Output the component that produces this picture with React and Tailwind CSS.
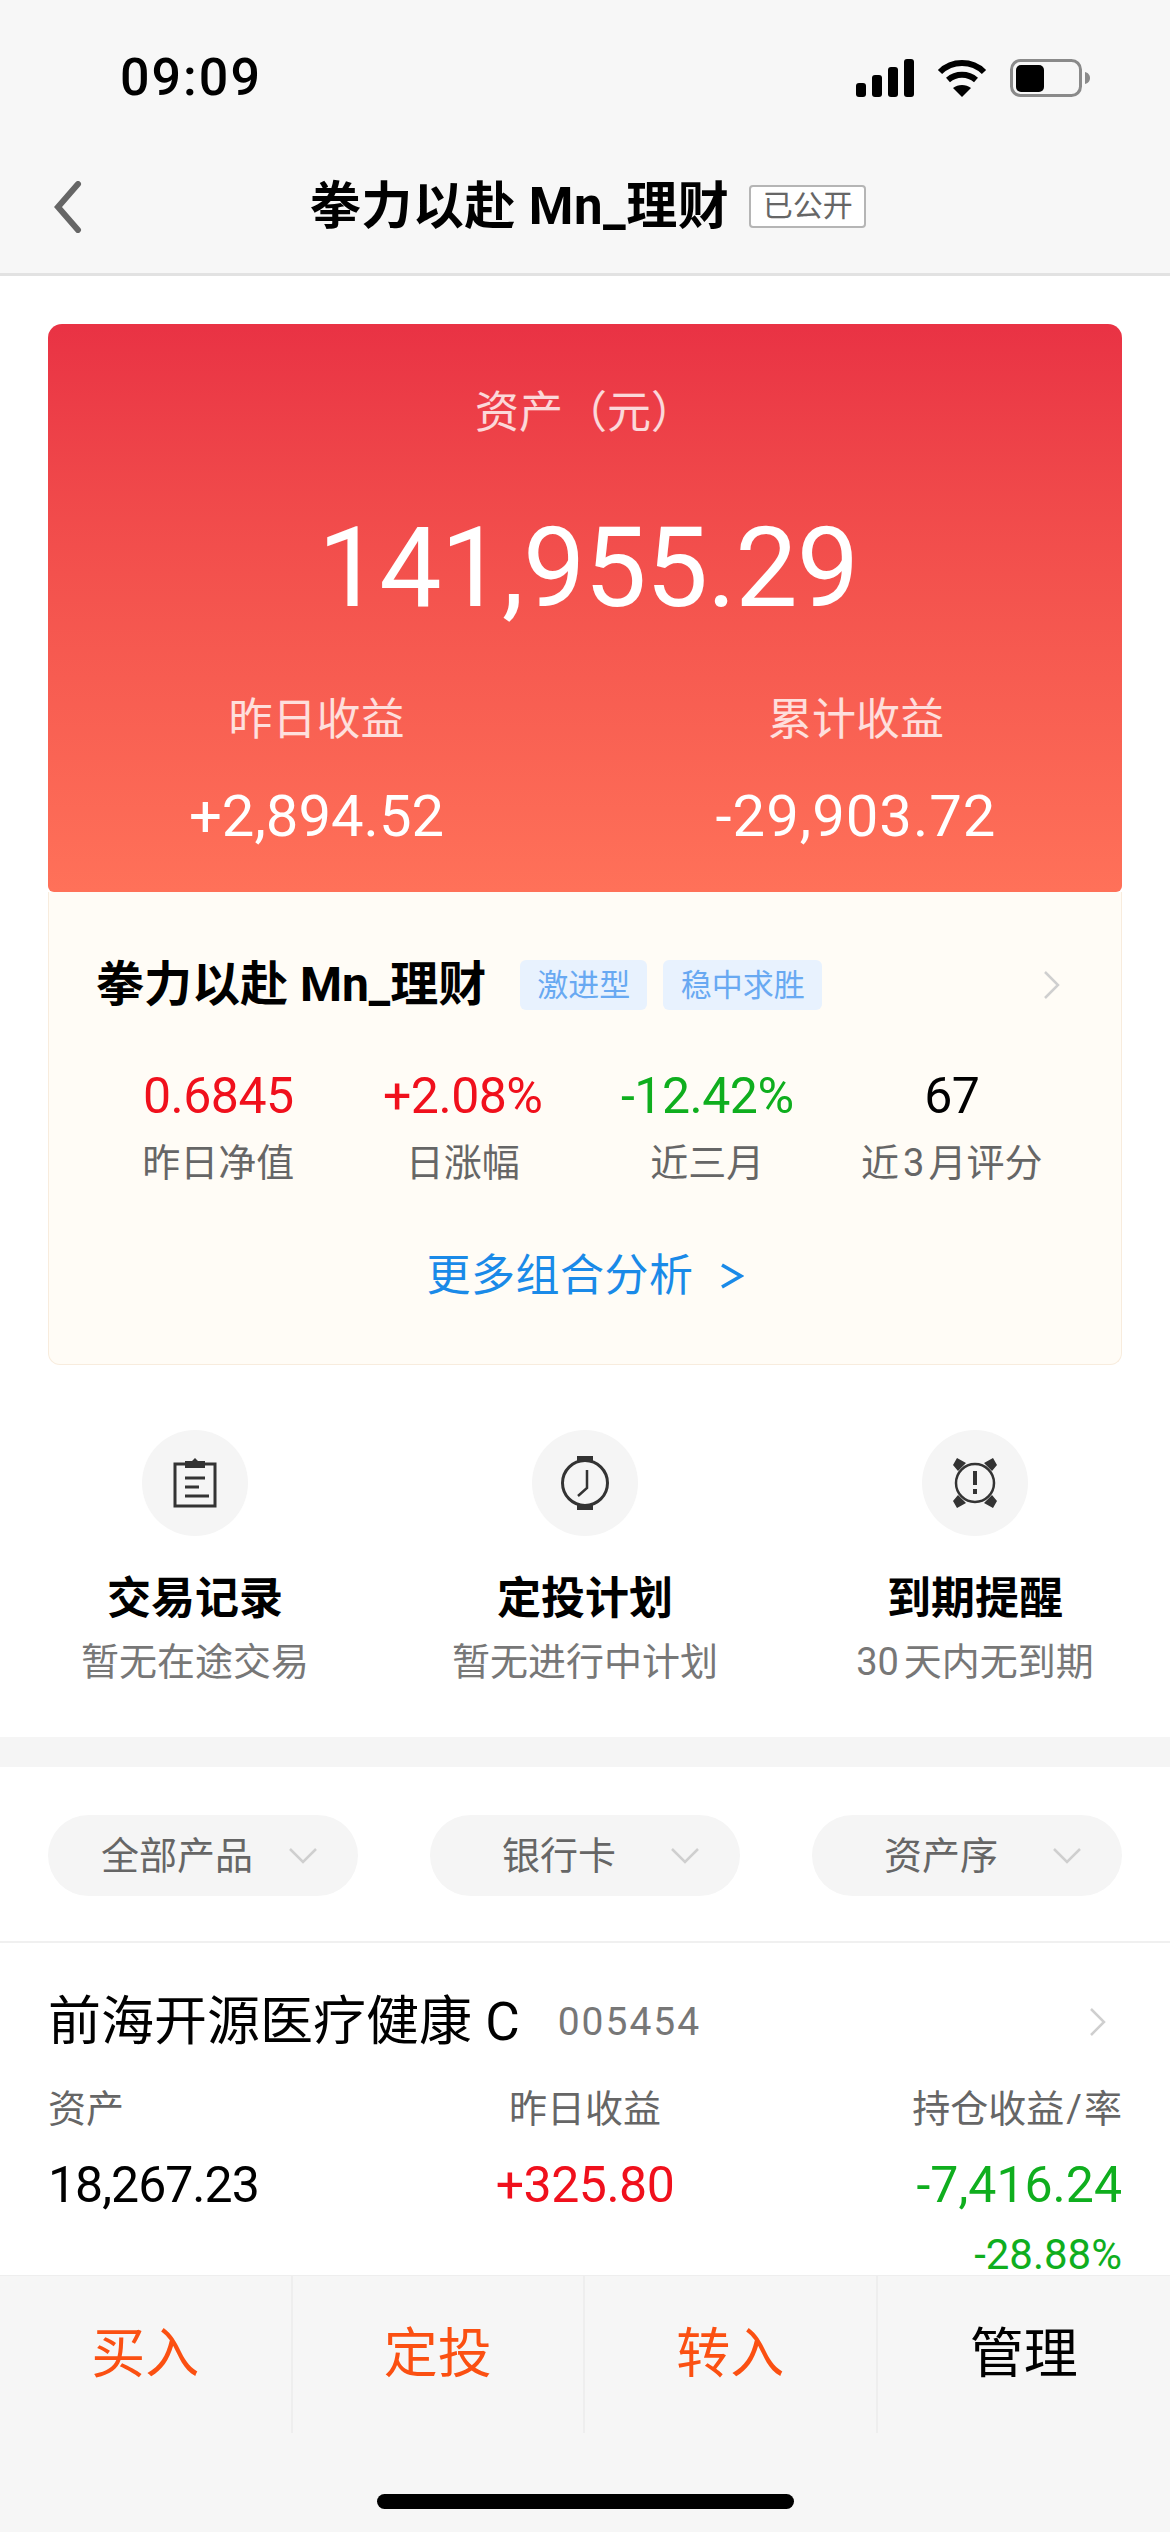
import React from "react";

const FONT = "font-['Roboto','Noto_Sans_CJK_SC',sans-serif]";

const stats = [
  { value: "0.6845", label: "昨日净值", color: "text-[#f0101c]" },
  { value: "+2.08%", label: "日涨幅", color: "text-[#f0101c]" },
  { value: "-12.42%", label: "近三月", color: "text-[#0fae1e]" },
  { value: "67", label: <>近<span className="mx-[4px]">3</span>月评分</>, color: "text-black" },
];

const filters = ["全部产品", "银行卡", "资产序"];
const actions = [
  { label: "买入", color: "text-[#fb5012]" },
  { label: "定投", color: "text-[#fb5012]" },
  { label: "转入", color: "text-[#fb5012]" },
  { label: "管理", color: "text-black" },
];

const ClipboardIcon = () => (
  <svg width="44" height="50" viewBox="0 0 44 50" fill="none" stroke="#333" strokeWidth="3">
    <rect x="2" y="6" width="40" height="42" />
    <path d="M12 3h7l3-3 3 3h7v7H12z" fill="#333" stroke="none" />
    <path d="M12 20h20M12 29h14M12 38h24" strokeWidth="3" />
  </svg>
);

const WatchIcon = () => (
  <svg width="48" height="54" viewBox="0 0 48 54" fill="none" stroke="#333" strokeWidth="3">
    <circle cx="24" cy="27" r="22.5" />
    <path d="M16 0h16v6H16zM16 48h16v6H16z" fill="#333" stroke="none" />
    <path d="M26 14v18l-9 8" strokeWidth="2.5" />
  </svg>
);

const AlarmIcon = () => (
  <svg width="46" height="50" viewBox="0 0 46 50" fill="none" stroke="#333" strokeWidth="2.5">
    <circle cx="23" cy="25" r="19" />
    <path d="M5 0l9 5-8 8-5-6zM41 0l-9 5 8 8 5-6zM5 50l9-5-8-8-5 6zM41 50l-9-5 8-8 5 6z" fill="#333" stroke="none" />
    <path d="M23 13v14" strokeWidth="4" />
    <path d="M23 31v5" strokeWidth="4" />
  </svg>
);

const shortcuts = [
  { icon: <ClipboardIcon />, title: "交易记录", sub: "暂无在途交易" },
  { icon: <WatchIcon />, title: "定投计划", sub: "暂无进行中计划" },
  { icon: <AlarmIcon />, title: "到期提醒", sub: <>30<span className="ml-[5px]">天内无到期</span></> },
];

const Chevron = ({ className = "" }) => (
  <svg className={className} width="17" height="28" viewBox="0 0 17 28" fill="none" stroke="#cfcfcf" strokeWidth="2.5">
    <path d="M2 1l13 13L2 27" />
  </svg>
);

const App = () => {
  return (
    <div className={`${FONT} flex h-[2532px] w-[1170px] flex-col overflow-hidden bg-white`}>
      {/* status bar + nav */}
      <div className="h-[276px] shrink-0 border-b-[3px] border-[#e2e2e2] bg-[#f7f7f7]">
        <div className="flex h-[156px] items-center justify-between pl-[120px] pr-[79px]">
          <span className="text-[52px] font-medium leading-none tracking-[2px] text-black">09:09</span>
          <div className="flex items-center gap-[23px]">
            <svg width="58" height="38" viewBox="0 0 58 38" fill="black">
              <rect x="0" y="24" width="10" height="14" rx="3" />
              <rect x="16" y="16" width="10" height="22" rx="3" />
              <rect x="32" y="8" width="10" height="30" rx="3" />
              <rect x="48" y="0" width="10" height="38" rx="3" />
            </svg>
            <svg width="50" height="38" viewBox="0 0 50 38" fill="none" stroke="black" strokeWidth="6">
              <path d="M3 13c12-12 32-12 44 0" />
              <path d="M11 21c8-7 20-7 28 0" />
              <path d="M25 38l-9-9c5-4 13-4 18 0z" fill="black" stroke="none" />
            </svg>
            <svg width="81" height="38" viewBox="0 0 81 38" fill="none">
              <rect x="1.5" y="1.5" width="69" height="35" rx="9" stroke="#8a8a8a" strokeWidth="3" />
              <rect x="6" y="6" width="28" height="27" rx="5" fill="black" />
              <path d="M75 13c4 1 5 4 5 6s-1 5-5 6z" fill="#8a8a8a" />
            </svg>
          </div>
        </div>
        <div className="relative flex h-[100px] items-center justify-center">
          <svg className="absolute left-[54px] top-[25px]" width="28" height="52" viewBox="0 0 28 52" fill="none" stroke="#666" strokeWidth="6" strokeLinecap="round">
            <path d="M24 3L4 26l20 23" />
          </svg>
          <div className="ml-[6px] flex items-center">
            <span className="text-[51px] font-bold leading-none tracking-[0.5px] text-black">拳力以赴 Mn_理财</span>
            <span className="ml-[20px] flex h-[43px] w-[117px] items-center justify-center rounded-[4px] border-2 border-[#b5b5b5] bg-white text-[30px] leading-none text-[#666]">已公开</span>
          </div>
        </div>
      </div>

      {/* page content, runs on under the action bar */}
      <div className="min-h-0 flex-1">
        <div className="px-[48px] pt-[48px]">
          <div className="h-[568px] rounded-t-[14px] rounded-b-[6px] bg-gradient-to-b from-[#e93244] to-[#ff7159] text-center text-white">
            <div className="pt-[62px] text-[44px] leading-[54px] text-white/80">资产（元）</div>
            <div className="mt-[58px] pl-[6px] text-[111px] font-normal leading-[140px] tracking-[-1px]">141,955.29</div>
            <div className="mt-[56px] grid grid-cols-2">
              <div>
                <div className="text-[44px] leading-[52px] text-white/80">昨日收益</div>
                <div className="mt-[36px] text-[58px] leading-[68px]">+2,894.52</div>
              </div>
              <div className="pl-[5px]">
                <div className="text-[44px] leading-[52px] text-white/80">累计收益</div>
                <div className="mt-[36px] text-[58px] leading-[68px] tracking-[1px]">-29,903.72</div>
              </div>
            </div>
          </div>
          <div className="h-[473px] rounded-b-[12px] border border-t-0 border-[#f8ecdd] bg-[#fffcf6] px-[47px]">
            <div className="flex h-[174px] items-center pt-[12px]">
              <span className="text-[48px] font-bold leading-none text-black">拳力以赴 Mn_理财</span>
              <span className="ml-[34px] flex h-[50px] w-[127px] items-center justify-center rounded-[6px] bg-[#e8f2fe] text-[31px] leading-none text-[#68a9f2]">激进型</span>
              <span className="ml-[16px] flex h-[50px] w-[159px] items-center justify-center rounded-[6px] bg-[#e8f2fe] text-[31px] leading-none text-[#68a9f2]">稳中求胜</span>
              <Chevron className="ml-auto mr-[14px]" />
            </div>
            <div className="grid grid-cols-4 text-center">
              {stats.map((s) => (
                <div key={s.value}>
                  <div className={`text-[50px] leading-[60px] tracking-[-0.5px] ${s.color}`}>{s.value}</div>
                  <div className="mt-[13px] text-[38px] leading-[48px] text-[#666]">{s.label}</div>
                </div>
              ))}
            </div>
            <div className="mt-[61px] flex items-center justify-center text-[44px] leading-[56px] tracking-[0.5px] text-[#1a8ae8]">
              更多组合分析
              <svg className="ml-[26px]" width="24" height="26" viewBox="0 0 24 26" fill="none" stroke="#1a8ae8" strokeWidth="3.5">
                <path d="M2 2l19 11L2 24" />
              </svg>
            </div>
          </div>
        </div>

        {/* shortcuts */}
        <div className="grid h-[372px] grid-cols-3 pt-[65px] text-center">
          {shortcuts.map((s) => (
            <div key={s.title} className="flex flex-col items-center">
              <div className="flex h-[106px] w-[106px] items-center justify-center rounded-full bg-[#f5f5f5]">{s.icon}</div>
              <div className="mt-[35px] text-[44px] font-bold leading-[56px] text-black">{s.title}</div>
              <div className="mt-[11px] text-[38px] leading-[48px] text-[#777]">{s.sub}</div>
            </div>
          ))}
        </div>
        <div className="h-[30px] bg-[#f5f5f5]" />

        {/* filters */}
        <div className="flex h-[176px] justify-between border-b-2 border-[#f0f0f0] px-[48px] pt-[48px]">
          {filters.map((f) => (
            <div key={f} className="flex h-[81px] w-[310px] items-center rounded-full bg-[#f5f5f5] pl-[29px]">
              <span className="w-[200px] text-center text-[38px] leading-none text-[#666]">{f}</span>
              <svg className="ml-[12px]" width="28" height="16" viewBox="0 0 28 16" fill="none" stroke="#cfcfcf" strokeWidth="2.5">
                <path d="M1 1l13 13L27 1" />
              </svg>
            </div>
          ))}
        </div>

        {/* holding row */}
        <div className="px-[48px] pt-[46px]">
          <div className="flex h-[66px] items-center">
            <span className="text-[53px] leading-none text-black">前海开源医疗健康 C</span>
            <span className="ml-[38px] text-[39px] leading-none tracking-[2px] text-[#777]">005454</span>
            <Chevron className="ml-auto mr-[16px]" />
          </div>
          <div className="mt-[30px] grid grid-cols-3">
            <div>
              <div className="text-[38px] leading-[48px] text-[#666]">资产</div>
              <div className="mt-[22px] text-[50px] leading-[60px] tracking-[-1px] text-black">18,267.23</div>
            </div>
            <div className="text-center">
              <div className="text-[38px] leading-[48px] text-[#666]">昨日收益</div>
              <div className="mt-[22px] text-[50px] leading-[60px] tracking-[-0.5px] text-[#f0101c]">+325.80</div>
            </div>
            <div className="text-right">
              <div className="text-[38px] leading-[48px] text-[#666]">持仓收益<span className="mx-[2px]">/</span>率</div>
              <div className="mt-[22px] text-[50px] leading-[60px] text-[#0fae1e]">-7,416.24</div>
              <div className="mt-[20px] text-[42px] leading-[40px] text-[#0fae1e]">-28.88%</div>
            </div>
          </div>
        </div>
      </div>

      {/* bottom actions */}
      <div className="relative h-[257px] shrink-0 border-t border-[#eeeeee] bg-[#f6f6f6]">
        <div className="grid h-[157px] grid-cols-4 divide-x-2 divide-[#eeeeee]">
          {actions.map((a) => (
            <div key={a.label} className={`flex items-center justify-center text-[54px] leading-none ${a.color}`}>{a.label}</div>
          ))}
        </div>
        <div className="mx-auto mt-[61px] h-[15px] w-[417px] rounded-full bg-black" />
      </div>
    </div>
  );
};

export default App;
